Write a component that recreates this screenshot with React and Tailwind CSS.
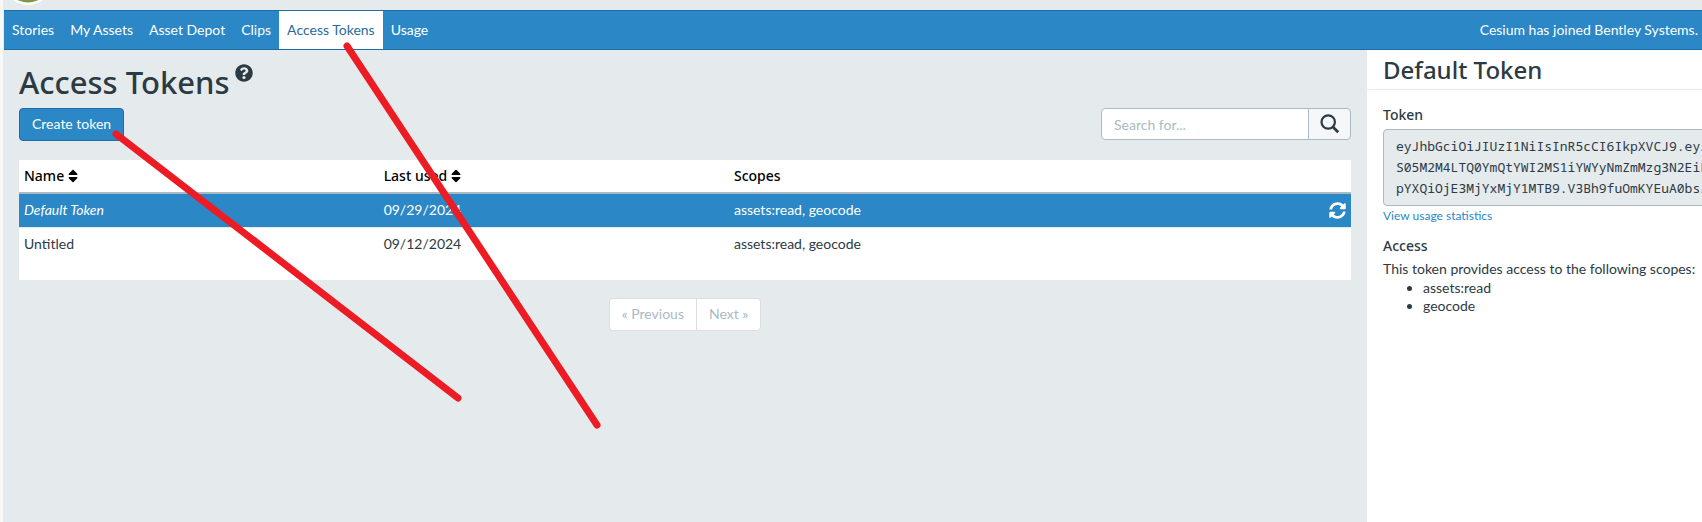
import { FaQuestionCircle, FaSort, FaSyncAlt } from "react-icons/fa";

const NAV = ["Stories", "My Assets", "Asset Depot", "Clips", "Access Tokens", "Usage"];

const TOKENS = [
  { name: "Default Token", used: "09/29/2024", scopes: "assets:read, geocode", isDefault: true },
  { name: "Untitled", used: "09/12/2024", scopes: "assets:read, geocode", isDefault: false },
];

const TOKEN_LINES = [
  "eyJhbGciOiJIUzI1NiIsInR5cCI6IkpXVCJ9.eyJ",
  "S05M2M4LTQ0YmQtYWI2MS1iYWYyNmZmMzg3N2EiL",
  "pYXQiOjE3MjYxMjY1MTB9.V3Bh9fuOmKYEuA0bsJ",
];

function Logo() {
  return (
    <svg className="ml-2 block" width="34" height="5" viewBox="0 0 34 5" aria-hidden="true">
      <circle cx="17" cy="-20" r="25" fill="#ffffff" />
      <circle cx="17" cy="-20" r="22.5" fill="#7a9a3f" />
    </svg>
  );
}

function TopNav() {
  return (
    <nav className="flex h-10 items-stretch justify-between border-y border-[#1f6ca3] bg-[#2b87c5] text-white">
      <div className="flex">
        {NAV.map((item) => (
          <a
            key={item}
            href="#"
            className={
              item === "Access Tokens"
                ? "flex items-center bg-white px-2 text-[#2a6a9e]"
                : "flex items-center px-2"
            }
          >
            {item}
          </a>
        ))}
      </div>
      <a href="#" className="flex items-center pr-1">
        Cesium has joined Bentley Systems.
      </a>
    </nav>
  );
}

function SortHeader({ children }) {
  return (
    <button type="button" className="flex items-center gap-1 font-medium">
      {children}
      <FaSort className="h-4 w-[10px]" />
    </button>
  );
}

function TokenTable() {
  return (
    <div className="bg-white pb-5">
      <table className="w-full table-fixed border-collapse text-left">
        <thead>
          <tr className="h-[33px] border-b-2 border-[#a9bac5] font-['Noto_Sans',sans-serif] text-black">
            <th className="w-[27%] px-[5px] font-medium">
              <SortHeader>Name</SortHeader>
            </th>
            <th className="w-[26.3%] px-[5px] font-medium">
              <SortHeader>Last used</SortHeader>
            </th>
            <th className="px-[5px] font-medium">Scopes</th>
            <th className="w-10" aria-label="Actions" />
          </tr>
        </thead>
        <tbody>
          {TOKENS.map((t) => (
            <tr
              key={t.name}
              className={t.isDefault ? "h-[34px] border-b border-[#e5eaed] bg-[#2b87c5] text-white" : "h-[33px]"}
            >
              <td className={t.isDefault ? "px-[5px] italic" : "px-[5px]"}>{t.name}</td>
              <td className="px-[5px]">{t.used}</td>
              <td className="px-[5px]">{t.scopes}</td>
              <td className="pr-[5px]">
                {t.isDefault && (
                  <button type="button" aria-label="Regenerate token" className="ml-auto block">
                    <FaSyncAlt className="size-[17px]" />
                  </button>
                )}
              </td>
            </tr>
          ))}
        </tbody>
      </table>
    </div>
  );
}

function Main() {
  return (
    <main className="min-w-0 flex-1 px-4">
      <header className="flex h-[58px] items-start gap-[5px] pt-3">
        <h1 className="font-['Noto_Sans',sans-serif] text-[31px] leading-10 font-medium">Access Tokens</h1>
        <FaQuestionCircle className="mt-[2px] size-[18px]" />
      </header>
      <div className="flex items-start justify-between pb-[19px]">
        <button
          type="button"
          className="h-[33px] rounded border border-[#1f6ca3] bg-[#2b87c5] px-3 pb-[2px] text-white"
        >
          Create token
        </button>
        <form className="flex h-8 w-[250px]">
          <input
            type="text"
            aria-label="Search for"
            placeholder="Search for..."
            className="min-w-0 flex-1 rounded-l border border-[#a9bac5] bg-white px-3 pt-[2px] placeholder:text-[#a9bac5]"
          />
          <button
            type="button"
            aria-label="Search"
            className="-ml-px flex w-[43px] items-center justify-center rounded-r border border-[#a9bac5] bg-[#f5f7f9]"
          >
            <svg width="20" height="20" viewBox="0 0 20 20" fill="none" stroke="currentColor" strokeWidth="2.2">
              <circle cx="8.2" cy="8" r="6.7" />
              <path d="M13 13l5.2 5.2" strokeWidth="2.8" />
            </svg>
          </button>
        </form>
      </div>
      <TokenTable />
      <div className="mt-[18px] flex h-[33px] justify-center text-[#a9bac5]">
        <button type="button" className="rounded-l border border-[#dddddd] bg-white px-3 pb-[2px]">
          « Previous
        </button>
        <button type="button" className="-ml-px rounded-r border border-[#dddddd] bg-white px-3 pb-[2px]">
          Next »
        </button>
      </div>
    </main>
  );
}

function Details() {
  return (
    <aside className="w-[335px] shrink-0 overflow-hidden bg-white">
      <h2 className="h-10 border-b border-[#e5eaed] px-4 pt-1 font-['Noto_Sans',sans-serif] text-2xl leading-8 font-medium">
        Default Token
      </h2>
      <div className="pt-[15px] pl-4">
        <h3 className="pb-1 font-['Noto_Sans',sans-serif] leading-5 font-medium">Token</h3>
        <pre className="w-[400px] rounded border border-[#a9bac5] bg-[#e5eaed] px-3 py-[6px] font-['Noto_Sans_Mono','DejaVu_Sans_Mono',monospace] text-[13px] leading-[21px]">
          {TOKEN_LINES.join("\n")}
        </pre>
        <a href="#" className="block text-xs leading-5 text-[#2b87c5]">
          View usage statistics
        </a>
        <h3 className="pt-[10px] font-['Noto_Sans',sans-serif] leading-5 font-medium">Access</h3>
        <p className="pt-[3px] leading-5">This token provides access to the following scopes:</p>
        <ul className="list-disc pl-10 leading-[18px]">
          <li>assets:read</li>
          <li>geocode</li>
        </ul>
      </div>
    </aside>
  );
}

/* Hand-drawn pointer strokes laid over the page. */
function Strokes() {
  return (
    <svg
      className="pointer-events-none absolute top-0 left-0"
      width="620"
      height="440"
      viewBox="0 0 620 440"
      stroke="#ed1c24"
      strokeWidth="7"
      strokeLinecap="round"
      aria-hidden="true"
    >
      <path d="M116 134L458 398" />
      <path d="M347 46L597 425" />
    </svg>
  );
}

export default function App() {
  return (
    <div className="relative flex min-h-screen flex-col overflow-hidden border-l-3 border-[#f8f8f6] bg-[#e5eaed] font-['Lato',sans-serif] text-sm text-[#2c3a44]">
      <div className="h-[10px]">
        <Logo />
      </div>
      <div className="pl-px">
        <TopNav />
      </div>
      <div className="flex flex-1">
        <Main />
        <Details />
      </div>
      <div className="absolute top-0 -left-[3px]">
        <Strokes />
      </div>
    </div>
  );
}
